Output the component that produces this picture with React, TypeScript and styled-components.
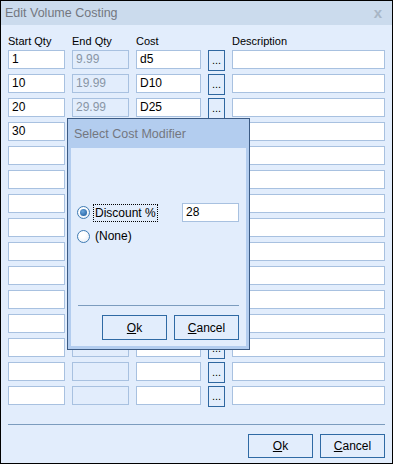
import React from "react";
import styled, { createGlobalStyle } from "styled-components";

const GlobalStyle = createGlobalStyle`
  body {
    margin: 0;
    font-family: "Liberation Sans", Arial, sans-serif;
    font-size: 12px;
    color: #000;
  }
`;

const rows = [
  { start: "1", end: "9.99", cost: "d5" },
  { start: "10", end: "19.99", cost: "D10" },
  { start: "20", end: "29.99", cost: "D25" },
  { start: "30", end: "", cost: "" },
  ...Array.from({ length: 11 }, () => ({ start: "", end: "", cost: "" })),
];

// rows whose "..." button sits fully under the modal
const coveredRow = (i: number) => i >= 3 && i <= 11;

const Window = styled.div`
  position: relative;
  width: 393px;
  height: 464px;
  box-sizing: border-box;
  border: 1px solid #000;
  background: #e2edfc;
  display: flex;
  flex-direction: column;
`;

const TitleBar = styled.div<{ $tall?: boolean }>`
  height: ${(p) => (p.$tall ? "29px" : "24px")};
  flex-shrink: 0;
  display: flex;
  align-items: center;
  justify-content: space-between;
  padding: 0 10px 0 ${(p) => (p.$tall ? "6px" : "4px")};
  background: ${(p) => (p.$tall ? "#b3cdef" : "#cbdbed")};
  color: #737780;
  font-size: 12.5px;
`;

const Close = styled.span`
  color: #a8b6c6;
  font-weight: bold;
  font-size: 15px;
  line-height: 1;
  margin-top: -2px;
`;

const Content = styled.div`
  flex: 1;
  display: flex;
  flex-direction: column;
  padding: 0 7px;
`;

const Grid = styled.div`
  display: grid;
  grid-template-columns: 57px 57px 65px 17px 153px;
  grid-auto-rows: 19px;
  column-gap: 7px;
  row-gap: 5px;
`;

const Label = styled.div`
  font-size: 11px;
  align-self: end;
  margin-bottom: 3px;
`;

const HeaderRow = styled.div`
  display: grid;
  grid-template-columns: 57px 57px 65px 17px 153px;
  column-gap: 7px;
  height: 25px;
`;

const Field = styled.div<{ $readOnly?: boolean; $width?: number }>`
  box-sizing: border-box;
  height: 19px;
  width: ${(p) => (p.$width ? `${p.$width}px` : "auto")};
  border: 1px solid #a8c1e0;
  background: ${(p) => (p.$readOnly ? "#e2edfc" : "#fff")};
  color: ${(p) => (p.$readOnly ? "#8996a6" : "#000")};
  padding: 0 3px;
  font-size: 12px;
  line-height: 17px;
  white-space: nowrap;
  overflow: hidden;
`;

const Dots = styled.div`
  box-sizing: border-box;
  height: 21px;
  border: 1px solid #2f67a0;
  background: #e2edfc;
  font-size: 11px;
  line-height: 1;
  display: flex;
  align-items: flex-end;
  justify-content: center;
  padding-bottom: 4px;
`;

const Separator = styled.div<{ $inset?: number }>`
  height: 1px;
  background: #7c9cbe;
  margin-left: ${(p) => p.$inset ?? 0}px;
`;

const ButtonRow = styled.div<{ $top: number }>`
  display: flex;
  justify-content: flex-end;
  gap: 7px;
  margin-top: ${(p) => p.$top}px;
`;

const Button = styled.div<{ $height: number }>`
  box-sizing: border-box;
  width: 65px;
  height: ${(p) => p.$height}px;
  border: 1px solid #2f6aa4;
  background: #e2edfc;
  display: flex;
  align-items: center;
  justify-content: center;
  font-size: 12px;
`;

const Modal = styled.div`
  position: absolute;
  left: 66px;
  top: 117px;
  width: 183px;
  height: 232px;
  box-sizing: border-box;
  border: 1px solid #3c5b84;
  display: flex;
  flex-direction: column;
  background: #b3cdef;
`;

const ModalBody = styled.div`
  flex: 1;
  margin: 0 3px 3px;
  background: #e2edfc;
  display: flex;
  flex-direction: column;
  padding: 55px 7px 6px 6px;
`;

const OptionRow = styled.div<{ $height: number }>`
  display: flex;
  align-items: center;
  height: ${(p) => p.$height}px;
  margin-bottom: 6px;
`;

const Radio = styled.span<{ $checked?: boolean }>`
  position: relative;
  box-sizing: border-box;
  width: 13px;
  height: 13px;
  border-radius: 50%;
  border: 1px solid #3f7bb3;
  background: radial-gradient(circle at 40% 35%, #ffffff 30%, #dfe9f4 100%);
  flex-shrink: 0;
  margin-right: 4px;
  &::after {
    content: "";
    display: ${(p) => (p.$checked ? "block" : "none")};
    position: absolute;
    left: 2px;
    top: 2px;
    width: 7px;
    height: 7px;
    border-radius: 50%;
    background: radial-gradient(circle at 40% 35%, #6aa5dc 0%, #1f5e9f 90%);
  }
`;

const OptionText = styled.span<{ $focused?: boolean }>`
  font-size: 12px;
  padding: 1px 1px;
  outline: ${(p) => (p.$focused ? "1px dotted #000" : "none")};
`;

const Spacer = styled.div`
  flex: 1;
`;

const App = () => {
  return (
    <>
      <GlobalStyle />
      <Window>
        <TitleBar>
          <span>Edit Volume Costing</span>
          <Close>x</Close>
        </TitleBar>
        <Content>
          <HeaderRow>
            <Label>Start Qty</Label>
            <Label>End Qty</Label>
            <Label>Cost</Label>
            <span />
            <Label>Description</Label>
          </HeaderRow>
          <Grid>
            {rows.map((r, i) => (
              <React.Fragment key={i}>
                <Field>{r.start}</Field>
                <Field $readOnly>{r.end}</Field>
                <Field>{r.cost}</Field>
                <Dots>{coveredRow(i) ? "" : "..."}</Dots>
                <Field />
              </React.Fragment>
            ))}
          </Grid>
          <Spacer />
          <Separator />
          <ButtonRow $top={9}>
            <Button $height={24}>
              <u>O</u>k
            </Button>
            <Button $height={24}>
              <u>C</u>ancel
            </Button>
          </ButtonRow>
          <div style={{ height: 5 }} />
        </Content>

        <Modal>
          <TitleBar $tall>
            <span>Select Cost Modifier</span>
          </TitleBar>
          <ModalBody>
            <OptionRow $height={19}>
              <Radio $checked />
              <OptionText $focused>Discount %</OptionText>
              <Spacer />
              <Field $width={57}>28</Field>
            </OptionRow>
            <OptionRow $height={16}>
              <Radio />
              <OptionText>(None)</OptionText>
            </OptionRow>
            <Spacer />
            <Separator $inset={1} />
            <ButtonRow $top={9}>
              <Button $height={25}>
                <u>O</u>k
              </Button>
              <Button $height={25}>
                <u>C</u>ancel
              </Button>
            </ButtonRow>
          </ModalBody>
        </Modal>
      </Window>
    </>
  );
};

export default App;
